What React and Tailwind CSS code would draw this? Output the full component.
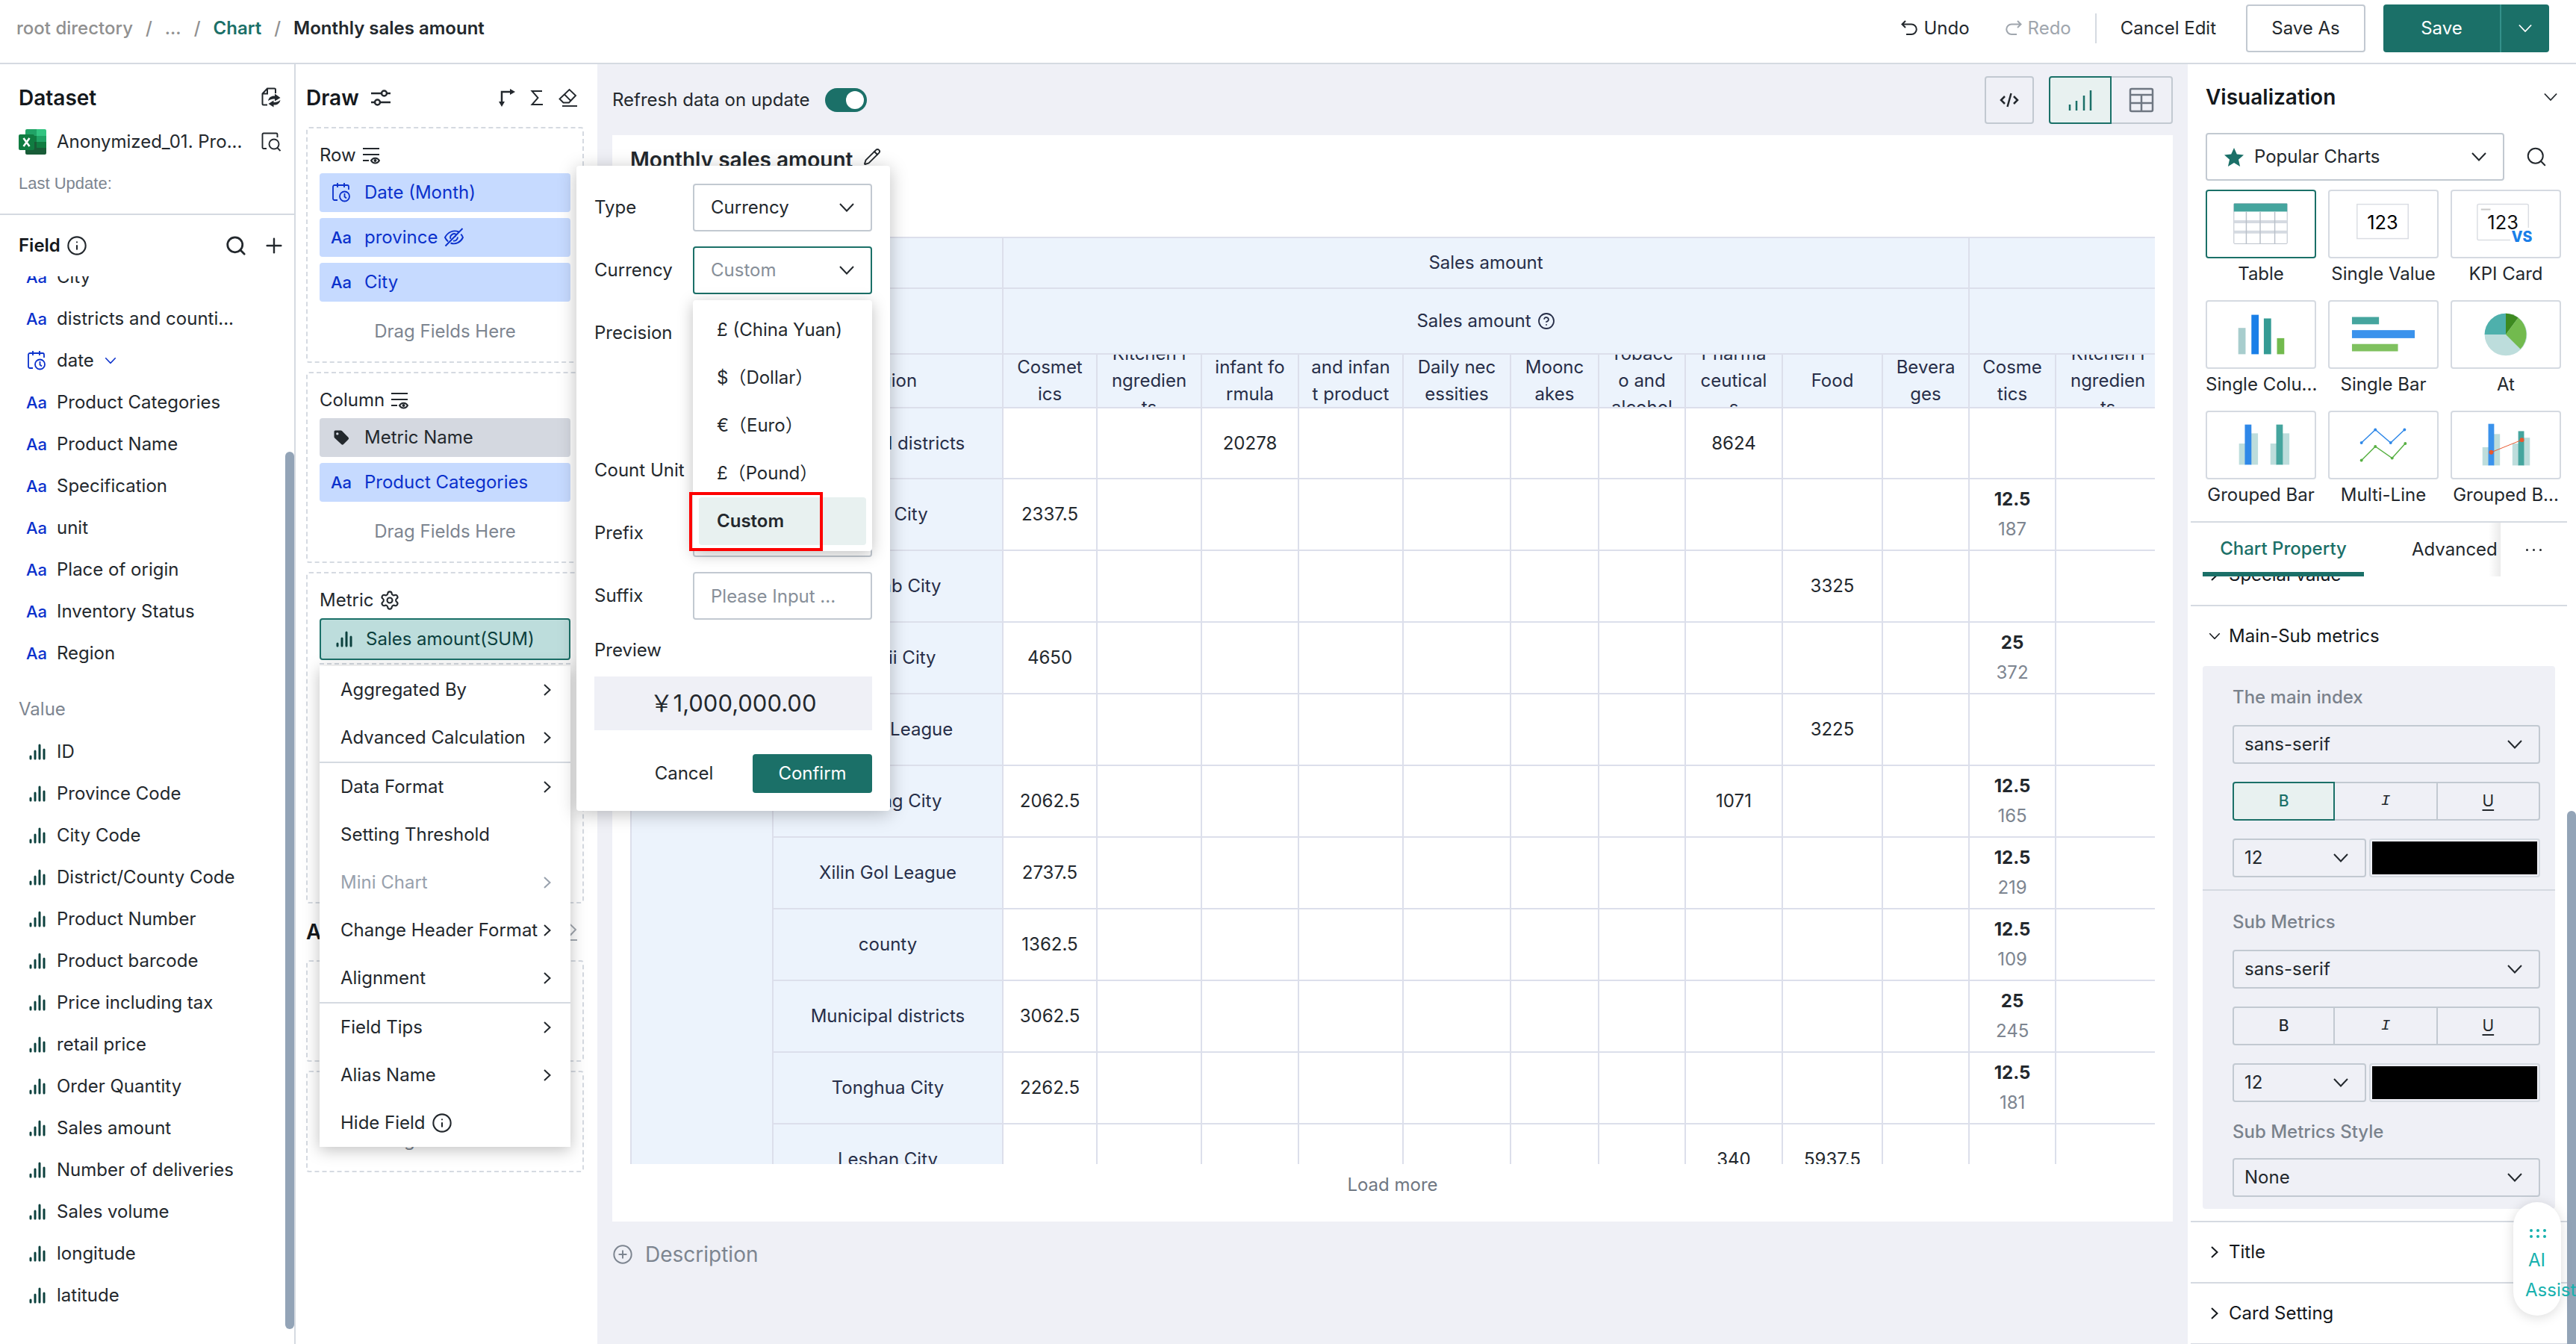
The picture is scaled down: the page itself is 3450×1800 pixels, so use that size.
import React from 'react'
import { Search, Plus, Info, Settings, Pencil, CircleHelp, CirclePlus } from 'lucide-react'

const fields = [
  { name: 'City' },
  { name: 'districts and counti...' },
  { name: 'date', type: 'date' },
  { name: 'Product Categories' },
  { name: 'Product Name' },
  { name: 'Specification' },
  { name: 'unit' },
  { name: 'Place of origin' },
  { name: 'Inventory Status' },
  { name: 'Region' },
]

const values = [
  'ID', 'Province Code', 'City Code', 'District/County Code', 'Product Number', 'Product barcode',
  'Price including tax', 'retail price', 'Order Quantity', 'Sales amount', 'Number of deliveries',
  'Sales volume', 'longitude', 'latitude',
]

const menuGroups = [
  [{ label: 'Aggregated By', sub: true }, { label: 'Advanced Calculation', sub: true }],
  [
    { label: 'Data Format', sub: true },
    { label: 'Setting Threshold' },
    { label: 'Mini Chart', sub: true, disabled: true },
    { label: 'Change Header Format', sub: true },
    { label: 'Alignment', sub: true },
  ],
  [{ label: 'Field Tips', sub: true }, { label: 'Alias Name', sub: true }, { label: 'Hide Field', info: true }],
]

const currencies = ['£ (China Yuan)', '$（Dollar）', '€（Euro）', '£（Pound）', 'Custom']

// header labels are broken by hand, the cell clips whatever does not fit
const columns = [
  ['Cosmet', 'ics'],
  ['Kitchen i', 'ngredien', 'ts'],
  ['infant fo', 'rmula'],
  ['and infan', 't product'],
  ['Daily nec', 'essities'],
  ['Moonc', 'akes'],
  ['Tobacc', 'o and', 'alcohol'],
  ['Pharma', 'ceutical', 's'],
  ['Food'],
  ['Bevera', 'ges'],
  ['Cosme', 'tics'],
  ['Kitchen i', 'ngredien', 'ts'],
]

const rows = [
  { city: 'Municipal districts', cells: { 2: '20278', 7: '8624' } },
  { city: 'Yulin City', cells: { 0: '2337.5', 10: ['12.5', '187'] } },
  { city: 'Punjaab City', cells: { 8: '3325' } },
  { city: 'Wuhaii City', cells: { 0: '4650', 10: ['25', '372'] } },
  { city: 'Xing’an League', cells: { 8: '3225' } },
  { city: 'Baoding City', cells: { 0: '2062.5', 7: '1071', 10: ['12.5', '165'] } },
  { city: 'Xilin Gol League', cells: { 0: '2737.5', 10: ['12.5', '219'] } },
  { city: 'county', cells: { 0: '1362.5', 10: ['12.5', '109'] } },
  { city: 'Municipal districts', cells: { 0: '3062.5', 10: ['25', '245'] } },
  { city: 'Tonghua City', cells: { 0: '2262.5', 10: ['12.5', '181'] } },
  { city: 'Leshan City', cells: { 7: '340', 8: '5937.5' } },
]

function Down({ className = '' }) {
  return (
    <svg viewBox="0 0 20 12" className={`h-3 w-5 shrink-0 ${className}`} fill="none" stroke="currentColor" strokeWidth="2">
      <path d="M1 1l9 9.5L19 1" />
    </svg>
  )
}

function Right({ className = '' }) {
  return (
    <svg viewBox="0 0 10 16" className={`h-4 w-[10px] shrink-0 ${className}`} fill="none" stroke="currentColor" strokeWidth="2">
      <path d="M1 1l7.500 7L1 15" />
    </svg>
  )
}

function UndoIcon({ className = '' }) {
  return (
    <svg viewBox="0 0 22 22" className={`h-[22px] w-[22px] ${className}`} fill="none" stroke="currentColor" strokeWidth="2">
      <path d="M6 1L1.500 5.500 6 10M2 5.500h12a6.500 6.500 0 0 1 0 13.500H7" />
    </svg>
  )
}

function BarsIcon() {
  return (
    <svg viewBox="0 0 22 22" className="h-[22px] w-[22px] shrink-0" stroke="#0c413e" strokeWidth="3" strokeLinecap="round">
      <path d="M2 17v3M8 10v10M14 2v18M20 8v12" />
    </svg>
  )
}

function CalendarIcon() {
  return (
    <svg viewBox="0 0 24 26" className="h-[26px] w-6 shrink-0" fill="none" stroke="#0b31cc" strokeWidth="1.800">
      <path d="M7 23H3a2 2 0 0 1-2-2V5a2 2 0 0 1 2-2h17a2 2 0 0 1 2 2v4M7 0v6M16 0v6" />
      <circle cx="16.500" cy="18" r="6.500" />
      <path d="M16.500 14v4.500l2.500 2" />
    </svg>
  )
}

function Aa() {
  return <span className="w-7 shrink-0 text-center text-[22px] font-medium text-[#0b31cc]">Aa</span>
}

function EyeOffIcon() {
  return (
    <svg viewBox="0 0 28 26" className="h-[26px] w-7" fill="none" stroke="currentColor" strokeWidth="1.900">
      <path d="M20.500 5.500C13 2.500 5.500 6 2 13c1 2.200 2.400 4 4.200 5.500M9.500 20.500C16 23 23 19.500 26 13c-.6-1.600-1.500-3-2.700-4.300" />
      <path d="M17.500 9.500A5 5 0 0 0 9.500 15M13 17.500a5 5 0 0 0 6-5M13.500 13l3-2M2.500 24.500L25.500 1" />
    </svg>
  )
}

function LinesEye() {
  return (
    <svg viewBox="0 0 24 24" className="h-6 w-6" fill="none" stroke="currentColor" strokeWidth="2">
      <path d="M1 3h22M1 11h22M1 19h8" />
      <path d="M12 19c2.500-4.500 8.500-4.500 11 0-2.500 4.500-8.500 4.500-11 0z" />
      <circle cx="17.500" cy="19" r="1" />
    </svg>
  )
}

function TagIcon() {
  return (
    <svg viewBox="0 0 22 22" className="h-[22px] w-[22px]" fill="#23282d">
      <path fillRule="evenodd" d="M3 1.500h7.500a2 2 0 0 1 1.400.6l8.600 8.600a2 2 0 0 1 0 2.800l-6.500 6.500a2 2 0 0 1-2.800 0L2.100 11.400a2 2 0 0 1-.6-1.400V3A1.500 1.500 0 0 1 3 1.500zM5.800 4.200a1.700 1.700 0 1 0 0 3.400 1.700 1.700 0 0 0 0-3.400z" />
    </svg>
  )
}

function EraserIcon({ className = '' }) {
  return (
    <svg viewBox="0 0 26 26" className={`h-[26px] w-[26px] ${className}`} fill="none" stroke="currentColor" strokeWidth="1.900">
      <path d="M14.500 2L23 10l-9 9.500H6.500L1.500 14.500zM8 8.500l8.500 8.500" />
      <path d="M5 24h20" />
    </svg>
  )
}

function SigmaIcon() {
  return (
    <svg viewBox="0 0 18 22" className="h-[22px] w-[18px]" fill="none" stroke="currentColor" strokeWidth="1.900">
      <path d="M16 2H2.500l8 9-8 9H17" />
    </svg>
  )
}

function ExcelIcon() {
  return (
    <svg viewBox="0 0 37 34" className="h-[34px] w-[37px] shrink-0">
      <path d="M11 0h13v9H9V2a2 2 0 0 1 2-2z" fill="#21a366" />
      <path d="M24 0h11a2 2 0 0 1 2 2v7H24z" fill="#33c481" />
      <path d="M9 9h15v8H9z" fill="#107c41" />
      <path d="M24 9h13v8H24z" fill="#21a366" />
      <path d="M9 17h28v15a2 2 0 0 1-2 2H11a2 2 0 0 1-2-2z" fill="#185c37" />
      <path d="M24 17h13v8H24z" fill="#107c41" />
      <rect y="7" width="21" height="21" rx="2" fill="#107c41" />
      <path d="M6.500 12l8 11M14.500 12l-8 11" stroke="#fff" strokeWidth="2.600" />
    </svg>
  )
}

function SwapFileIcon() {
  return (
    <svg viewBox="0 0 26 28" className="h-7 w-[26px]">
      <path d="M8 23.500H3a1.500 1.500 0 0 1-1.500-1.500V8.500L8 1.500h9.500A1.500 1.500 0 0 1 19 3v5M8 1.500V8.500H1.500" fill="none" stroke="currentColor" strokeWidth="2" />
      <path d="M9 18c1-5 5-7 9-6.500V8.500l7.500 5.500-7.500 4.500V15.500c-3-.4-6 .5-9 2.500zM25.500 17c-1 5-5 7-9 6.500v3L9.500 22l7-4.500v2.500c3 .4 6-.8 9-3z" fill="currentColor" />
    </svg>
  )
}

function FileSearchIcon() {
  return (
    <svg viewBox="0 0 26 26" className="h-[26px] w-[26px]" fill="none" stroke="currentColor" strokeWidth="1.900">
      <path d="M7 22H3a1.500 1.500 0 0 1-1.500-1.500V3A1.500 1.500 0 0 1 3 1.500h17A1.500 1.500 0 0 1 21.500 3v4" />
      <circle cx="17" cy="16" r="6.500" />
      <path d="M21.500 21l4 4" />
    </svg>
  )
}

function SlidersIcon() {
  return (
    <svg viewBox="0 0 26 24" className="h-6 w-[26px]" fill="none" stroke="currentColor" strokeWidth="2.500">
      <path d="M0 6h14M22 6h4M0 18h5M13 18h13" />
      <circle cx="17.500" cy="6" r="3.500" />
      <circle cx="8.500" cy="18" r="3.500" />
    </svg>
  )
}

function TransposeIcon() {
  return (
    <svg viewBox="0 0 22 24" className="h-6 w-[22px]">
      <path d="M4 19V4h13" fill="none" stroke="currentColor" strokeWidth="2.500" />
      <path d="M15 0l7 4-7 4zM0 17h8l-4 7z" fill="currentColor" />
    </svg>
  )
}

function Select({ id, label, value, className = '', textClass = 'px-[14px]' }) {
  return (
    <div className={`grid items-center ${className}`}>
      <select
        id={id}
        aria-label={label}
        defaultValue={value}
        className={`col-start-1 row-start-1 h-full w-full appearance-none rounded border-2 border-inherit bg-transparent outline-none ${textClass}`}
      >
        <option>{value}</option>
      </select>
      <Down className="pointer-events-none col-start-1 row-start-1 mr-6 justify-self-end" />
    </div>
  )
}

function Header() {
  return (
    <header className="h-[86px] shrink-0 border-b-2 border-[#d5dae1] bg-white pt-[6px]">
      <div className="flex h-16 items-center justify-between pl-[22px] pr-9">
        <nav className="flex items-center gap-[17px] font-medium text-[#909090]">
          <a href="#root">root directory</a>
          <span>/</span>
          <a href="#more">...</a>
          <span>/</span>
          <a href="#chart" className="font-semibold text-[#1b7068]">Chart</a>
          <span>/</span>
          <span className="font-semibold text-[#23282d]">Monthly sales amount</span>
        </nav>
        <div className="flex h-full items-center">
          <button className="flex items-center gap-2">
            <UndoIcon /> Undo
          </button>
          <button className="ml-12 flex items-center gap-2 text-[#a0a6ae]">
            <UndoIcon className="-scale-x-100" /> Redo
          </button>
          <span className="ml-8 h-10 w-[2px] bg-[#d5dae1]" />
          <button className="ml-8">Cancel Edit</button>
          <button className="ml-10 h-16 w-40 rounded border-2 border-[#c2c9d1]">Save As</button>
          <div className="ml-6 flex h-16 overflow-hidden rounded bg-[#1b7068] text-white">
            <button className="w-[156px]">Save</button>
            <button aria-label="More save options" className="flex w-[66px] items-center justify-center border-l-2 border-[#34918a]">
              <Down className="scale-90" />
            </button>
          </div>
        </div>
      </div>
    </header>
  )
}

function DatasetPanel() {
  return (
    <aside className="relative flex w-[396px] shrink-0 flex-col border-r-2 border-[#d5dae1] bg-white">
      <div className="border-b-2 border-[#d5dae1] pb-4 pl-[25px] pr-[18px] pt-[18px]">
        <div className="flex h-[54px] items-center justify-between">
          <h2 className="text-[28px] font-semibold text-[#14181c]">Dataset</h2>
          <button aria-label="Switch dataset"><SwapFileIcon /></button>
        </div>
        <div className="flex h-16 items-center">
          <ExcelIcon />
          <span className="ml-[14px] flex-1">Anonymized_01. Pro...</span>
          <button aria-label="Preview dataset"><FileSearchIcon /></button>
        </div>
        <p className="flex h-12 items-center font-['Liberation_Sans',sans-serif] text-[22px] text-[#7d8590]">Last Update:</p>
      </div>
      <div className="flex h-[82px] shrink-0 items-center pl-[25px] pr-[11px]">
        <h3 className="font-semibold text-[#14181c]">Field</h3>
        <Info size={28} strokeWidth={1.8} className="ml-2" />
        <span className="flex-1" />
        <button aria-label="Search fields"><Search size={30} strokeWidth={2.2} /></button>
        <button aria-label="Add field" className="ml-5"><Plus size={32} strokeWidth={1.8} /></button>
      </div>
      <div className="min-h-0 flex-1 overflow-hidden">
        <ul className="-mt-[27px]">
          {fields.map((f) => (
            <li key={f.name} className="flex h-14 items-center pl-[35px]">
              {f.type === 'date' ? <span className="flex w-7 justify-center"><CalendarIcon /></span> : <Aa />}
              <span className="ml-[13px]">{f.name}</span>
              {f.type === 'date' && <Down className="ml-3 scale-75 text-[#0b31cc]" />}
            </li>
          ))}
        </ul>
        <p className="flex h-[76px] items-end pb-[11px] pl-[25px] text-[#7d8590]">Value</p>
        <ul>
          {values.map((v) => (
            <li key={v} className="flex h-14 items-center gap-[15px] pl-[39px]">
              <BarsIcon />
              {v}
            </li>
          ))}
        </ul>
      </div>
      <span className="absolute bottom-5 right-0 top-[519px] w-3 rounded-full bg-[#93a4b7]" />
    </aside>
  )
}

function DropZone({ title, icon, children, className = '' }) {
  return (
    <section className={`mb-3 rounded border-2 border-dashed border-[#d5dae1] px-4 pt-4 ${className}`}>
      <h3 className="mb-1 flex h-10 items-center gap-2">
        {title} {icon}
      </h3>
      {children}
    </section>
  )
}

function Chip({ icon, children, className = 'bg-[#c6daff] text-[#0b31cc]' }) {
  return (
    <div className={`flex h-[52px] items-center rounded pl-[15px] ${className}`}>
      <span className="flex w-7 justify-center">{icon}</span>
      <span className="ml-[17px] flex items-center gap-2">{children}</span>
    </div>
  )
}

function MetricMenu() {
  return (
    <ul className="absolute left-0 right-0 top-16 z-10 bg-white shadow-[0_4px_20px_rgba(0,0,0,0.25)]">
      {menuGroups.map((group, g) => (
        <React.Fragment key={g}>
          {g > 0 && <li className="h-[2px] bg-[#d5dae1]" />}
          {group.map((item) => (
            <li key={item.label}>
              <button
                disabled={item.disabled}
                className="flex h-16 w-full items-center whitespace-nowrap pl-[28px] pr-[26px] disabled:text-[#98a1ad]"
              >
                {item.label}
                {item.info && <Info size={28} strokeWidth={1.8} className="ml-2" />}
                {item.sub && <Right className="ml-auto" />}
              </button>
            </li>
          ))}
        </React.Fragment>
      ))}
    </ul>
  )
}

function FormatPopup() {
  return (
    <form className="absolute left-[376px] top-[136px] z-20 flex w-[420px] flex-col gap-5 rounded bg-white p-6 shadow-[0_4px_24px_rgba(0,0,0,0.25)]">
      <div className="flex h-16 items-center justify-between">
        <label htmlFor="fmt-type">Type</label>
        <Select id="fmt-type" label="Type" value="Currency" className="h-16 w-60 border-[#c2c9d1]" textClass="pl-[22px]" />
      </div>
      <div className="relative flex h-16 items-center justify-between">
        <label htmlFor="fmt-currency">Currency</label>
        <Select id="fmt-currency" label="Currency" value="Custom" className="h-16 w-60 border-[#1b7068]" textClass="pl-[22px] text-[#878f99]" />
        <ul className="absolute right-0 top-[72px] z-10 w-60 rounded bg-white p-2 shadow-[0_4px_20px_rgba(0,0,0,0.25)]">
          {currencies.map((c) => (
            <li key={c} className={`relative flex h-16 items-center whitespace-nowrap pl-6 ${c === 'Custom' ? 'rounded bg-[#e8f1f0] font-semibold' : ''}`}>
              {c}
              {c === 'Custom' && <span className="absolute -bottom-2 -left-[13px] -top-[7px] w-[179px] border-4 border-[#fd0000]" />}
            </li>
          ))}
        </ul>
      </div>
      <div className="flex h-[164px] items-start">
        <span className="flex h-16 items-center">Precision</span>
      </div>
      <div className="flex h-16 items-center">Count Unit</div>
      <div className="flex h-16 items-center justify-between">
        <label htmlFor="fmt-prefix">Prefix</label>
        <input id="fmt-prefix" className="h-16 w-60 rounded border-2 border-[#c2c9d1] px-[22px]" />
      </div>
      <div className="flex h-16 items-center justify-between">
        <label htmlFor="fmt-suffix">Suffix</label>
        <input id="fmt-suffix" placeholder="Please Input ..." className="h-16 w-60 rounded border-2 border-[#c2c9d1] px-[22px] placeholder:text-[#878f99]" />
      </div>
      <div>
        <p className="flex h-[42px] items-center">Preview</p>
        <output className="mt-[14px] flex h-[72px] items-center justify-center bg-[#eff0f6] text-[31px]">￥1,000,000.00</output>
      </div>
      <div className="mt-3 flex items-center justify-end">
        <button type="button" className="w-[136px]">Cancel</button>
        <button type="button" className="ml-6 h-[52px] w-40 rounded bg-[#1b7068] text-white">Confirm</button>
      </div>
    </form>
  )
}

function DrawPanel() {
  const hint = <p className="-mt-2 flex h-20 items-center justify-center text-[#7d8590]">Drag Fields Here</p>
  return (
    <aside className="relative w-[404px] shrink-0 bg-white pl-[14px] pr-[18px]">
      <div className="flex h-[84px] items-center pr-2 pt-[6px]">
        <h2 className="text-[28px] font-semibold text-[#14181c]">Draw</h2>
        <button aria-label="Draw settings" className="ml-4"><SlidersIcon /></button>
        <span className="flex-1" />
        <button aria-label="Transpose"><TransposeIcon /></button>
        <button aria-label="Aggregate" className="ml-5"><SigmaIcon /></button>
        <button aria-label="Clear" className="ml-5"><EraserIcon /></button>
      </div>
      <DropZone title="Row" icon={<LinesEye />}>
        <div className="flex flex-col gap-2">
          <Chip icon={<CalendarIcon />}>Date (Month)</Chip>
          <Chip icon={<Aa />}>province <EyeOffIcon /></Chip>
          <Chip icon={<Aa />}>City</Chip>
          {hint}
        </div>
      </DropZone>
      <DropZone title="Column" icon={<LinesEye />}>
        <div className="flex flex-col gap-2">
          <Chip icon={<TagIcon />} className="bg-[#d4d8e0] text-[#23282d]">Metric Name</Chip>
          <Chip icon={<Aa />}>Product Categories</Chip>
          {hint}
        </div>
      </DropZone>
      <DropZone title="Metric" icon={<Settings size={28} strokeWidth={1.8} />} className="h-[444px]">
        <div className="relative">
          <div className="flex h-14 items-center rounded border-2 border-[#1b7068] bg-[#bddddc] pl-5 text-[#0c413e]">
            <BarsIcon />
            <span className="ml-[18px]">Sales amount(SUM)</span>
          </div>
          <div className="mt-1 border-t-2 border-dashed border-[#d5dae1]" />
          <MetricMenu />
        </div>
      </DropZone>
      <div className="-mt-3 flex h-[76px] items-center justify-between pr-2">
        <h2 className="text-[28px] font-semibold text-[#14181c]">A</h2>
        <EraserIcon className="text-[#a0a6ae]" />
      </div>
      <DropZone className="h-[136px]" />
      <DropZone className="h-[136px]">
        <p className="flex h-[62px] items-center justify-center text-[#7d8590]">Drag Fields Here</p>
      </DropZone>
      <FormatPopup />
    </aside>
  )
}

function PivotTable() {
  const line = 'border-l-2 border-t-2 border-[#dcdfeb]'
  const head = `${line} bg-[#ecf3fc] p-0 font-normal text-[#272e48]`
  return (
    <table className="w-[2048px] table-fixed border-separate border-spacing-0 text-center">
      <colgroup>
        <col className="w-[190px]" />
        <col className="w-[308px]" />
        <col className="w-[126px]" />
        <col className="w-[140px]" />
        <col className="w-[130px]" />
        <col className="w-[140px]" />
        <col className="w-[144px]" />
        <col className="w-[118px]" />
        <col className="w-[116px]" />
        <col className="w-[130px]" />
        <col className="w-[134px]" />
        <col className="w-[116px]" />
        <col className="w-[116px]" />
        <col className="w-[140px]" />
      </colgroup>
      <thead>
        <tr className="h-[68px]">
          <th colSpan={2} className={head}></th>
          <th colSpan={10} className={head}>Sales amount</th>
          <th colSpan={2} className={head}></th>
        </tr>
        <tr className="h-[88px]">
          <th colSpan={2} className={head}></th>
          <th colSpan={10} className={head}>
            <span className="flex items-center justify-center gap-2">Sales amount <CircleHelp size={24} strokeWidth={1.8} /></span>
          </th>
          <th colSpan={2} className={head}></th>
        </tr>
        <tr className="h-[72px]">
          <th className={head}></th>
          <th className={head}>Region</th>
          {columns.map((lines, i) => (
            <th key={i} className={head}>
              <div className="flex h-[70px] flex-col justify-center overflow-hidden leading-9">
                {lines.map((l) => <span key={l} className="shrink-0 whitespace-nowrap">{l}</span>)}
              </div>
            </th>
          ))}
        </tr>
      </thead>
      <tbody>
        {rows.map((row, r) => (
          <tr key={r} className={r === 0 ? 'h-[95px]' : 'h-24'}>
            {r === 0 && <th rowSpan={rows.length} className={head}></th>}
            <th className={head}>{row.city}</th>
            {columns.map((_, i) => {
              const v = row.cells[i]
              return (
                <td key={i} className={`${line} p-0`}>
                  {Array.isArray(v) ? (
                    <div className="leading-10">
                      <div className="font-bold">{v[0]}</div>
                      <div className="text-[#7d8590]">{v[1]}</div>
                    </div>
                  ) : v}
                </td>
              )
            })}
          </tr>
        ))}
      </tbody>
    </table>
  )
}

function Canvas() {
  return (
    <main className="flex min-w-0 flex-1 flex-col bg-[#eff0f6] px-5">
      <div className="flex h-[95px] shrink-0 items-start justify-between pt-4">
        <label className="flex h-16 cursor-pointer items-center gap-5">
          Refresh data on update
          <input type="checkbox" defaultChecked className="peer sr-only" />
          <span className="flex h-8 w-14 items-center justify-end rounded-full bg-[#1b7068] p-1">
            <span className="h-6 w-6 rounded-full bg-white" />
          </span>
        </label>
        <div className="flex gap-5">
          <button aria-label="Code" className="flex h-16 w-[66px] items-center justify-center rounded border-2 border-[#c2c9d1]">
            <svg viewBox="0 0 26 20" className="h-5 w-[26px]" fill="none" stroke="currentColor" strokeWidth="2.500">
              <path d="M7 5l-5 5 5 5M19 5l5 5-5 5M15.500 1l-5 18" />
            </svg>
          </button>
          <div className="flex">
            <button aria-label="Chart view" className="flex h-16 w-[84px] items-center justify-center rounded-l border-2 border-[#1b7068] bg-[#e8f1f0]">
              <svg viewBox="0 0 32 28" className="h-7 w-8" stroke="#1b7068" strokeWidth="2.500">
                <path d="M2 20v8M11 15v13M21 8v20M30 1v27" />
              </svg>
            </button>
            <button aria-label="Table view" className="flex h-16 w-[82px] items-center justify-center rounded-r border-2 border-l-0 border-[#c2c9d1]">
              <svg viewBox="0 0 34 34" className="h-[34px] w-[34px]" fill="none" stroke="#6f7782" strokeWidth="2.500">
                <rect x="2" y="2" width="30" height="30" rx="2" />
                <path d="M2 10h30M2 21h30M17 10v22" />
              </svg>
            </button>
          </div>
        </div>
      </div>
      <section className="flex min-h-0 flex-1 flex-col bg-white px-6">
        <div className="flex h-[136px] shrink-0 items-start gap-[14px] pt-[13px]">
          <h1 className="text-[28px] font-semibold leading-10 text-[#23282d]">Monthly sales amount</h1>
          <button aria-label="Rename" className="pt-1"><Pencil size={24} strokeWidth={1.9} /></button>
        </div>
        <div className="min-h-0 flex-1 overflow-hidden">
          <PivotTable />
        </div>
        <div className="h-[77px] shrink-0 pt-[10px] text-center">
          <button className="leading-9 text-[#6f7782]">Load more</button>
        </div>
      </section>
      <div className="h-[164px] shrink-0 pt-6">
        <button className="flex items-center gap-4 text-[28px] leading-10 text-[#7d8590]">
          <CirclePlus size={28} strokeWidth={1.7} /> Description
        </button>
      </div>
    </main>
  )
}

const chartTypes = [
  {
    name: 'Table',
    art: (
      <>
        <rect x="37" y="18" width="73" height="55" rx="1" fill="#fff" stroke="#b9c0c9" />
        <rect x="37" y="18" width="73" height="11" fill="#45a59e" />
        <path d="M37 43h73M37 57h73" stroke="#d5dae1" strokeWidth="4" />
        <path d="M54 29v44M73 29v44M93 29v44" stroke="#b9c0c9" strokeWidth="1.500" />
      </>
    ),
  },
  {
    name: 'Single Value',
    art: (
      <>
        <rect x="38" y="19" width="70" height="47" fill="none" stroke="#dadde3" strokeWidth="1.500" />
        <text x="73" y="53" textAnchor="middle" fontSize="26" fill="#000">123</text>
      </>
    ),
  },
  {
    name: 'KPI Card',
    art: (
      <>
        <path d="M80 68H37a2 2 0 0 1-2-2V21a2 2 0 0 1 2-2h66a2 2 0 0 1 2 2v30" fill="none" stroke="#dadde3" strokeWidth="1.500" />
        <path d="M40 26h13" stroke="#c9c9c9" strokeWidth="2" />
        <text x="70" y="53" textAnchor="middle" fontSize="26" fill="#111">123</text>
        <text x="96" y="71" textAnchor="middle" fontSize="20" fontWeight="800" fill="#1a7fe8" stroke="#fff" strokeWidth="3" paintOrder="stroke">VS</text>
      </>
    ),
  },
  {
    name: 'Single Colu...',
    art: (
      <>
        <rect x="43" y="37" width="10" height="36" fill="#a8cdcd" />
        <rect x="61" y="19" width="10" height="54" fill="#1a7fe8" />
        <rect x="78" y="24" width="10" height="49" fill="#349b94" />
        <rect x="96" y="51" width="10" height="22" fill="#72ba4e" />
      </>
    ),
  },
  {
    name: 'Single Bar',
    art: (
      <>
        <rect x="31" y="22" width="37" height="10" fill="#45a59e" />
        <rect x="31" y="40" width="86" height="11" fill="#3a92ec" />
        <rect x="31" y="59" width="63" height="10" fill="#7fc15f" />
      </>
    ),
  },
  {
    name: 'At',
    art: (
      <>
        <circle cx="74" cy="46" r="29" fill="#bddddc" />
        <path d="M74 46H45a29 29 0 0 1 29-29z" fill="#4eb0ac" />
        <path d="M74 46V17a29 29 0 0 1 17 6z" fill="#3d8a20" />
        <path d="M74 46l17-23a29 29 0 0 1 3 43z" fill="#72ba4e" />
      </>
    ),
  },
  {
    name: 'Grouped Bar',
    art: (
      <>
        <rect x="44" y="44" width="9" height="29" fill="#bddddc" />
        <rect x="60" y="30" width="10" height="43" fill="#bddddc" />
        <rect x="52" y="18" width="9" height="55" fill="#2f88e8" />
        <rect x="87" y="44" width="9" height="29" fill="#bddddc" />
        <rect x="103" y="30" width="10" height="43" fill="#bddddc" />
        <rect x="95" y="18" width="9" height="55" fill="#45a59e" />
      </>
    ),
  },
  {
    name: 'Multi-Line',
    art: (
      <>
        <path d="M44 43l19-18 21 18 19-18" fill="none" stroke="#2f88e8" strokeWidth="1.500" />
        <path d="M44 67l19-19 23 16 18-20" fill="none" stroke="#58b043" strokeWidth="1.500" />
        <g fill="#2f88e8"><circle cx="44" cy="43" r="2" /><circle cx="63" cy="25" r="2" /><circle cx="84" cy="43" r="2" /><circle cx="103" cy="25" r="2" /></g>
        <g fill="#58b043"><circle cx="44" cy="67" r="2" /><circle cx="63" cy="48" r="2" /><circle cx="86" cy="64" r="2" /><circle cx="104" cy="44" r="2" /></g>
      </>
    ),
  },
  {
    name: 'Grouped B...',
    art: (
      <>
        <rect x="42" y="49" width="9" height="25" fill="#bddddc" />
        <rect x="57" y="31" width="9" height="43" fill="#bddddc" />
        <rect x="50" y="17" width="8" height="57" fill="#3a92ec" />
        <rect x="83" y="44" width="9" height="30" fill="#bddddc" />
        <rect x="98" y="36" width="9" height="38" fill="#bddddc" />
        <rect x="91" y="27" width="8" height="47" fill="#45a59e" />
        <path d="M54 56l42-17" stroke="#e8582e" />
        <circle cx="54" cy="56" r="3" fill="#e8582e" />
        <circle cx="96" cy="39" r="3" fill="#e8582e" />
      </>
    ),
  },
]

function TextStyle({ id, title, bold }) {
  return (
    <fieldset>
      <legend className="flex h-[79px] items-center pt-1 font-medium text-[#7a828c]">{title}</legend>
      <Select label={`${title} font`} value="sans-serif" className="h-[52px] border-[#c2c9d1]" />
      <div className="my-6 grid h-[52px] grid-cols-3 text-[21px]">
        <button aria-label="Bold" className={`rounded-l border-2 font-medium ${bold ? 'border-[#1b7068] bg-[#e8f1f0] text-[#1b7068]' : 'border-[#c2c9d1]'}`}>B</button>
        <button aria-label="Italic" className="border-2 border-l-0 border-[#c2c9d1] font-['Liberation_Mono',monospace] italic">I</button>
        <button aria-label="Underline" className="rounded-r border-2 border-l-0 border-[#c2c9d1] underline underline-offset-4">U</button>
      </div>
      <div className="flex h-[52px] gap-1">
        <Select label={`${title} size`} value="12" className="h-[52px] w-[179px] border-[#c2c9d1]" />
        <button id={id} aria-label={`${title} colour`} className="flex-1 rounded border-2 border-[#d5dae1] p-[2px]">
          <span className="block h-full bg-black" />
        </button>
      </div>
    </fieldset>
  )
}

function Section({ title, open, children, className = '' }) {
  return (
    <section className={`border-b-2 border-[#d5dae1] ${className}`}>
      <button className="flex h-20 w-full items-center pl-[22px] text-[#14181c]">
        <span className="flex w-5 justify-center">{open ? <Down className="scale-75" /> : <Right />}</span>
        <span className="ml-[9px]">{title}</span>
      </button>
      {children}
    </section>
  )
}

function VisualizationPanel() {
  return (
    <aside className="relative flex w-[520px] shrink-0 flex-col overflow-hidden bg-white">
      <div className="pl-6 pr-5">
        <div className="flex h-[92px] items-center justify-between pb-1 pr-1">
          <h2 className="text-[28px] font-semibold text-[#14181c]">Visualization</h2>
          <button aria-label="Collapse"><Down className="scale-90" /></button>
        </div>
        <div className="flex items-center">
          <div className="grid h-16 w-[400px] items-center rounded border-2 border-[#c2c9d1]">
            <svg viewBox="0 0 26 25" className="col-start-1 row-start-1 ml-[23px] h-[25px] w-[26px]" fill="#1b7068">
              <path d="M13 0l3.800 8.600 9.200.9-7 6.200 2.100 9.300L13 20.100 4.900 25 7 15.700 0 9.500l9.200-.9z" />
            </svg>
            <select aria-label="Chart group" className="col-start-1 row-start-1 h-full w-full appearance-none bg-transparent pl-[63px]">
              <option>Popular Charts</option>
            </select>
            <Down className="pointer-events-none col-start-1 row-start-1 mr-[22px] justify-self-end" />
          </div>
          <button aria-label="Search charts" className="ml-7"><Search size={30} strokeWidth={1.6} /></button>
        </div>
        <div className="mt-3 grid grid-cols-3 gap-x-4 gap-y-[14px]">
          {chartTypes.map((c, i) => (
            <button key={i} className="block text-center">
              <svg
                viewBox="1 1 146 90"
                className={`h-[92px] w-full rounded border-2 ${i === 0 ? 'border-[#1b7068]' : 'border-[#d5dae1]'}`}
              >
                {c.art}
              </svg>
              <span className="block h-[42px] whitespace-nowrap leading-[42px]">{c.name}</span>
            </button>
          ))}
        </div>
      </div>
      <div className="ml-1 mr-3 mt-[14px] flex h-[74px] shrink-0 border-t-2 border-[#d5dae1]">
        <button className="ml-4 w-[216px] border-b-[6px] border-[#1b7068] pt-1 font-medium text-[#1b7068]">Chart Property</button>
        <button className="ml-16">Advanced</button>
        <span className="-ml-3 w-4 bg-linear-to-r from-transparent to-black/8" />
        <button aria-label="More tabs" className="ml-[34px] flex items-center gap-[6px]">
          <i className="h-[3px] w-[3px] rounded-full bg-[#23282d]" />
          <i className="h-[3px] w-[3px] rounded-full bg-[#23282d]" />
          <i className="h-[3px] w-[3px] rounded-full bg-[#23282d]" />
        </button>
      </div>
      <div className="min-h-0 flex-1 overflow-hidden pl-1 pr-3">
        <Section title="Special value" className="-mt-[42px]" />
        <Section title="Main-Sub metrics" open>
          <div className="mx-4 mb-4 rounded bg-[#eff0f6] pb-4">
            <div className="border-b-2 border-[#d5dae1] pb-4 pl-10 pr-5">
              <TextStyle id="main-color" title="The main index" bold />
            </div>
            <div className="pl-10 pr-5">
              <TextStyle id="sub-color" title="Sub Metrics" />
              <label htmlFor="sub-style" className="flex h-[75px] items-center pt-1 font-medium text-[#7a828c]">Sub Metrics Style</label>
              <Select id="sub-style" label="Sub Metrics Style" value="None" className="h-[52px] border-[#c2c9d1]" />
            </div>
          </div>
        </Section>
        <Section title="Title" />
        <Section title="Card Setting" />
      </div>
      <span className="absolute bottom-0 right-0 top-[1000px] w-3 rounded-t-full bg-[#93a4b7]" />
      <button className="absolute bottom-[38px] right-5 flex h-[152px] w-16 flex-col items-start rounded-[32px] bg-white pl-4 pt-9 text-left leading-10 text-[#17b1ae] shadow-[0_2px_16px_rgba(0,0,0,0.15)]">
        <svg viewBox="0 0 24 14" className="ml-[5px] h-[14px] w-6 shrink-0" fill="currentColor">
          <circle cx="3" cy="2" r="2" /><circle cx="12" cy="2" r="2" /><circle cx="21" cy="2" r="2" />
          <circle cx="3" cy="10" r="2" /><circle cx="12" cy="10" r="2" /><circle cx="21" cy="10" r="2" />
        </svg>
        <span className="ml-1 mt-2">AI</span>
        <span>Assist</span>
      </button>
    </aside>
  )
}

export default function App() {
  return (
    <div className="flex h-screen flex-col overflow-hidden font-[Inter,'Noto_Sans_CJK_SC',sans-serif] text-[24px] leading-9 text-[#23282d]">
      <Header />
      <div className="flex min-h-0 flex-1">
        <DatasetPanel />
        <DrawPanel />
        <Canvas />
        <VisualizationPanel />
      </div>
    </div>
  )
}
